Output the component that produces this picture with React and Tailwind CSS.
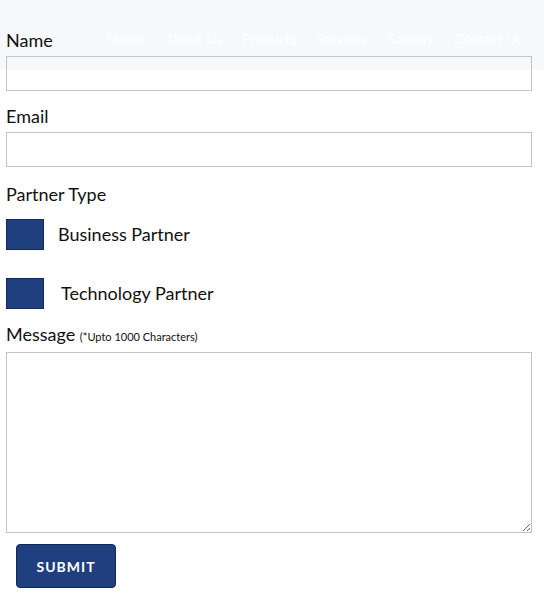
import React from 'react';

const navItems = ['Home', 'About Us', 'Products', 'Services', 'Careers', 'Contact Us'];

function Check({ label, offset }) {
  return (
    <div className="flex items-center h-[31px]">
      <span className="w-[38px] h-[31px] bg-[#1f3f7e] border border-[#12295a] shrink-0" />
      <span className={`${offset} text-[18px] text-[#111]`}>{label}</span>
    </div>
  );
}

export default function App() {
  return (
    <div className="relative w-[544px] h-[609px] bg-white overflow-hidden" style={{ fontFamily: 'Lato, "Open Sans", sans-serif' }}>
      {/* faded nav bar behind the form */}
      <div className="absolute left-0 top-0 w-full h-[70px] bg-[#f7f8fb]">
        <div className="flex gap-[20px] pl-[107px] pt-[28px] text-[14px] text-white">
          {navItems.map(n => <span key={n}>{n}</span>)}
        </div>
      </div>

      <form className="relative flex flex-col pl-[6px] pr-[12px] pt-[28px]">
        <label className="text-[18px] leading-[24px] text-[#111]">Name</label>
        <input className="mt-[4px] h-[35px] border border-[#c4c4c4] bg-transparent" />

        <label className="mt-[13px] text-[18px] leading-[24px] text-[#111]">Email</label>
        <input className="mt-[4px] h-[35px] border border-[#c4c4c4] bg-white" />

        <label className="mt-[15px] text-[18px] leading-[24px] text-[#111]">Partner Type</label>
        <div className="mt-[13px] flex flex-col gap-[28px]">
          <Check label="Business Partner" offset="ml-[14px]" />
          <Check label="Technology Partner" offset="ml-[17px]" />
        </div>

        <label className="mt-[13px] text-[18px] leading-[24px] text-[#111]">
          Message <span className="text-[11px]">(*Upto 1000 Characters)</span>
        </label>
        <textarea className="mt-[3px] h-[181px] border border-[#c4c4c4] bg-white resize" />

        <div className="mt-[11px] pl-[10px]">
          <button type="button" className="w-[100px] h-[44px] rounded-[4px] bg-[#1f3f7e] border border-[#12295a] text-white font-bold text-[14px] tracking-[1px]">
            SUBMIT
          </button>
        </div>
      </form>
    </div>
  );
}
